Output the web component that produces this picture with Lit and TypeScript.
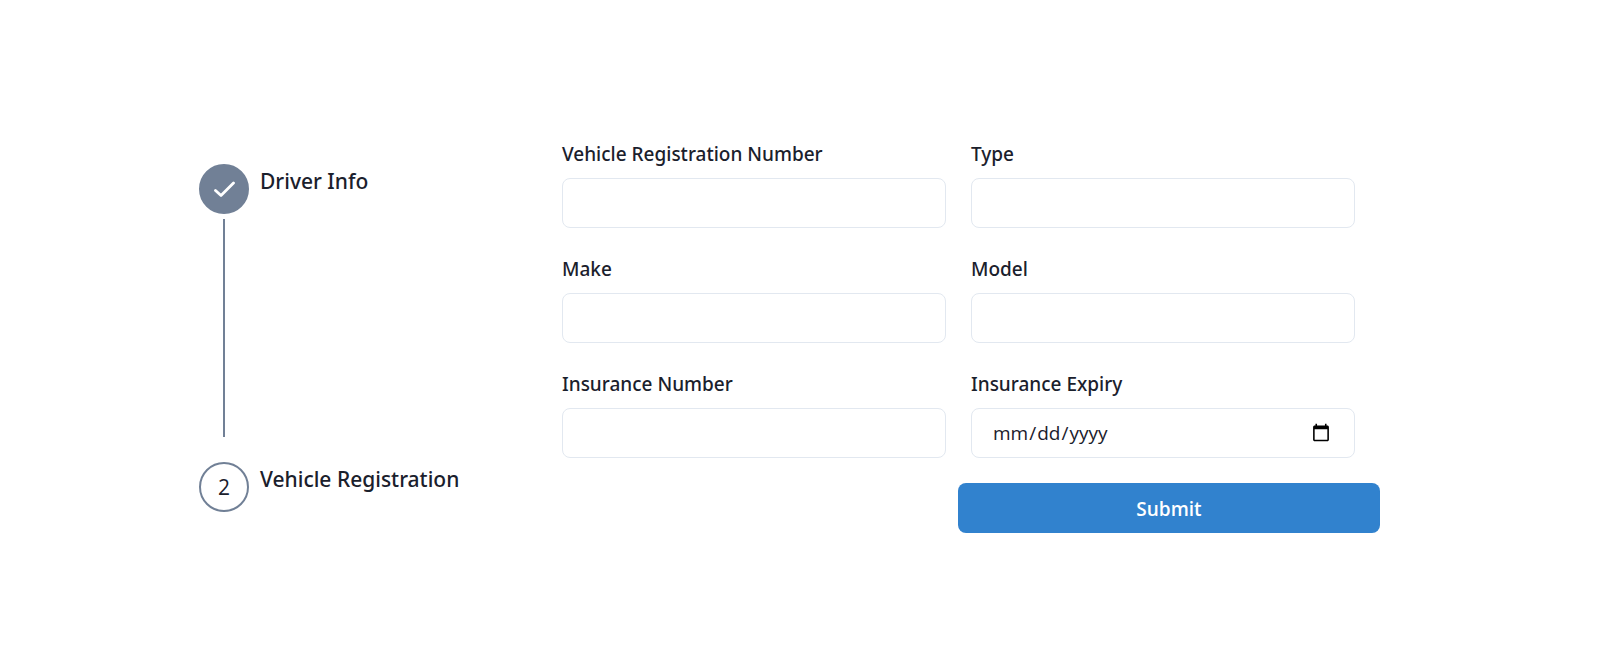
import { LitElement, html, css, svg, nothing } from "lit";
import { customElement, state } from "lit/decorators.js";
import { classMap } from "lit/directives/class-map.js";

interface Step {
  title: string;
}

interface Field {
  id: string;
  label: string;
  type: "text" | "date";
}

const STEPS: Step[] = [{ title: "Driver Info" }, { title: "Vehicle Registration" }];

const FIELDS: Field[] = [
  { id: "registration-number", label: "Vehicle Registration Number", type: "text" },
  { id: "vehicle-type", label: "Type", type: "text" },
  { id: "make", label: "Make", type: "text" },
  { id: "model", label: "Model", type: "text" },
  { id: "insurance-number", label: "Insurance Number", type: "text" },
  { id: "insurance-expiry", label: "Insurance Expiry", type: "date" },
];

const checkMark = svg`<path d="M1.5 9.5 L7 14.5 L19.5 2" fill="none" stroke="currentColor"
  stroke-width="2.8" stroke-linecap="round" stroke-linejoin="round" />`;

@customElement("app-root")
export class AppRoot extends LitElement {
  @state() private activeStep = 1;

  static styles = css`
    :host {
      display: block;
      color: #1a202c;
      background: #ffffff;
      font-family: "Segoe UI", "Open Sans", "Noto Sans", sans-serif;
      font-size: 19px;
      line-height: 32px;
    }
    .page {
      box-sizing: border-box;
      min-height: 100vh;
      display: flex;
      justify-content: center;
      align-items: center;
      padding: 0 222px 0 199px;
    }
    .layout {
      flex: 1;
      display: grid;
      grid-template-columns: 350px minmax(0, 1fr);
    }
    .steps {
      list-style: none;
      margin: 0;
      padding: 38px 0 22px;
      display: flex;
      flex-direction: column;
    }
    .step {
      display: grid;
      grid-template-columns: 50px 1fr;
      column-gap: 11px;
      align-items: start;
    }
    .step.linked {
      flex: 1;
      grid-template-rows: 50px 1fr;
      row-gap: 5px;
      padding-bottom: 25px;
    }
    .marker {
      box-sizing: border-box;
      width: 50px;
      height: 50px;
      border: 2px solid #718096;
      border-radius: 50%;
      display: flex;
      align-items: center;
      justify-content: center;
      font-size: 21px;
    }
    .marker.complete {
      background: #718096;
      color: #ffffff;
    }
    .check {
      width: 21px;
      height: 17px;
    }
    .line {
      width: 2px;
      height: 100%;
      justify-self: center;
      background: #718096;
    }
    .title {
      margin: 0;
      font-family: "Segoe UI", "Noto Sans", "Open Sans", sans-serif;
      font-size: 21px;
      font-weight: 500;
      line-height: 34px;
    }
    .form {
      display: grid;
      grid-template-columns: repeat(2, minmax(0, 1fr));
      gap: 25px;
      padding: 12px 25px 1px 13px;
    }
    .field {
      display: flex;
      flex-direction: column;
      gap: 8px;
    }
    .label {
      font-family: "Segoe UI", "Noto Sans", "Open Sans", sans-serif;
      font-weight: 500;
    }
    .input {
      box-sizing: border-box;
      width: 100%;
      height: 50px;
      margin: 0;
      padding: 0 21px 0 20px;
      border: 1px solid #e2e8f0;
      border-radius: 8px;
      background: #ffffff;
      color: inherit;
      font: inherit;
    }
    .input::-webkit-calendar-picker-indicator {
      width: 20px;
      height: 20px;
    }
    .input:focus-visible {
      outline: 2px solid #3182ce;
    }
    .submit {
      grid-column: 2;
      height: 50px;
      margin: 0 -25px 0 -13px;
      padding: 2px 0 0;
      border: 0;
      border-radius: 8px;
      background: #3182ce;
      color: #ffffff;
      font: inherit;
      font-weight: 600;
      cursor: pointer;
    }
    .submit:hover {
      background: #2b6cb0;
    }
    @media (max-width: 1200px) {
      .page {
        padding: 24px;
      }
    }
  `;

  private renderStep(step: Step, index: number) {
    const complete = index < this.activeStep;
    const linked = index < STEPS.length - 1;
    return html`
      <li class=${classMap({ step: true, linked })}>
        <div class=${classMap({ marker: true, complete })}>
          ${complete
            ? html`<svg class="check" viewBox="0 0 21 17" aria-label="Complete">${checkMark}</svg>`
            : index + 1}
        </div>
        <h3 class="title">${step.title}</h3>
        ${linked ? html`<div class="line"></div>` : nothing}
      </li>
    `;
  }

  private renderField(field: Field) {
    return html`
      <div class="field">
        <label class="label" for=${field.id}>${field.label}</label>
        <input class="input" id=${field.id} name=${field.id} type=${field.type} />
      </div>
    `;
  }

  render() {
    return html`
      <main class="page">
        <div class="layout">
          <ol class="steps">
            ${STEPS.map((step, index) => this.renderStep(step, index))}
          </ol>
          <form class="form" @submit=${(event: Event) => event.preventDefault()}>
            ${FIELDS.map((field) => this.renderField(field))}
            <button class="submit" type="submit">Submit</button>
          </form>
        </div>
      </main>
    `;
  }
}
